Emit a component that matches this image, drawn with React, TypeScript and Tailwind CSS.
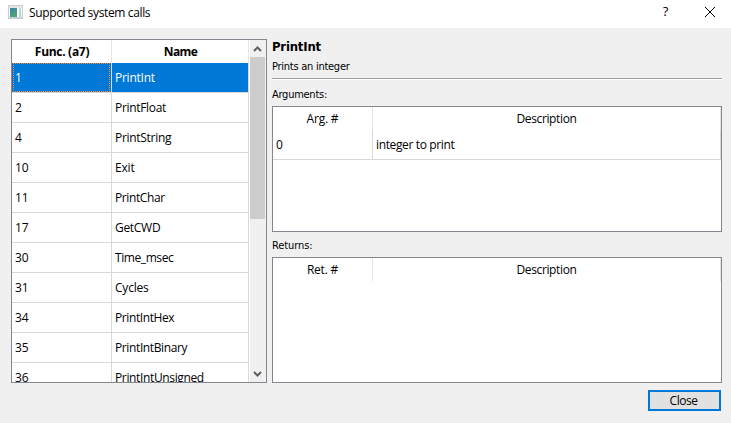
import React from "react";

const calls: [string, string, string][] = [
  ["1", "PrintInt", "tracking-[-0.25px]"],
  ["2", "PrintFloat", "tracking-[-0.32px]"],
  ["4", "PrintString", "tracking-[-0.3px]"],
  ["10", "Exit", "tracking-[-0.2px]"],
  ["11", "PrintChar", "tracking-[-0.4px]"],
  ["17", "GetCWD", "tracking-[-0.3px]"],
  ["30", "Time_msec", "tracking-[-0.42px]"],
  ["31", "Cycles", "tracking-[-0.2px]"],
  ["34", "PrintIntHex", "tracking-[-0.4px]"],
  ["35", "PrintIntBinary", "tracking-[-0.38px]"],
  ["36", "PrintIntUnsigned", "tracking-[-0.36px]"],
];

function AppIcon() {
  return (
    <svg width="15" height="14" viewBox="0 0 15 14" shapeRendering="crispEdges">
      <defs>
        <linearGradient id="pane" x1="0" y1="0" x2="0.6" y2="1">
          <stop offset="0" stopColor="#3f7fa8" />
          <stop offset="1" stopColor="#4fa673" />
        </linearGradient>
      </defs>
      <rect width="15" height="14" fill="#c9ccd0" />
      <rect x="1" y="1" width="13" height="2" fill="#e4e6e9" />
      <rect x="1" y="3" width="13" height="9" fill="#f8fafb" />
      <rect x="2" y="3" width="7" height="9" fill="url(#pane)" />
      <rect x="11" y="3" width="2" height="9" fill="#b9d8d6" />
    </svg>
  );
}

function DetailTable({ first, row }: { first: string; row?: [string, string] }) {
  return (
    <div className="flex h-[126px] flex-col border border-[#828790] bg-white">
      <div className="flex h-[23px] text-center leading-[24px]">
        <div className="w-[100px] border-r border-[#e5e5e5] tracking-[-0.2px]">{first}</div>
        <div className="flex-1 border-r border-[#e5e5e5]">Description</div>
      </div>
      {row && (
        <div className="flex h-[30px] border-b border-[#d8d8d8] leading-[30px]">
          <div className="w-[100px] border-r border-[#d8d8d8] pl-[3px]">{row[0]}</div>
          <div className="flex-1 border-r border-[#d8d8d8] pl-[3px]">{row[1]}</div>
        </div>
      )}
    </div>
  );
}

export default function App() {
  return (
    <div className="flex h-[423px] w-[731px] flex-col overflow-hidden bg-[#f0f0f0] font-['Open_Sans','Noto_Sans',sans-serif] text-[12px] tracking-[-0.36px] text-black">
      <header className="flex h-7 shrink-0 items-center bg-white pl-2">
        <div className="-mt-1">
          <AppIcon />
        </div>
        <h1 className="-mt-[3px] ml-1.5 flex-1">Supported system calls</h1>
        <span className="-mt-1 mr-[36px] text-[13px]">?</span>
        <svg className="-mt-1 mr-[15px]" width="12" height="12" viewBox="0 0 12 12" fill="none" stroke="#000">
          <path d="M1 1 11 11M11 1 1 11" />
        </svg>
      </header>

      <main className="flex gap-[5px] pr-[9px] pl-[11px]">
        <section className="mt-[11px] flex h-[344px] w-[256px] overflow-hidden border border-[#828790] bg-white">
          <div className="w-[237px] shrink-0">
            <div className="flex h-[23px] text-center leading-[24px] font-bold tracking-[-0.3px]">
              <div className="w-[100px] border-r border-[#e5e5e5] pl-px">Func. (a7)</div>
              <div className="w-[137px] border-r border-[#e5e5e5] pl-px tracking-[-0.6px]">Name</div>
            </div>
            {calls.map(([id, name, spacing], i) => (
              <div key={id} className={"flex h-[30px] border-b border-[#d8d8d8] leading-[30px] " + (i === 0 ? "text-white" : "")}>
                <div className={"flex w-[100px] border-r border-[#d8d8d8] tracking-[-0.1px] " + (i === 0 ? "bg-[#0078d7]" : "")}>
                  <div className={i === 0 ? "mr-px flex-1 border border-dotted border-[#ff8728] pl-[2px] leading-[28px] ml-px -indent-px" : "pl-[3px]"}>{id}</div>
                </div>
                <div className={"w-[137px] border-r border-[#d8d8d8] pl-[3px] " + spacing + (i === 0 ? " bg-[#0078d7]" : "")}>{name}</div>
              </div>
            ))}
          </div>
          <div className="ml-px flex flex-1 flex-col items-center bg-[#f0f0f0]">
            <svg className="h-[17px] shrink-0" width="16" height="17" viewBox="0 0 16 17" fill="none" stroke="#606060" strokeWidth="2">
              <path d="m4 11 3.5-3.5L11 11" />
            </svg>
            <div className="mr-px h-[162px] w-[15px] shrink-0 bg-[#cdcdcd]" />
            <svg className="mt-auto h-[17px] shrink-0" width="16" height="17" viewBox="0 0 16 17" fill="none" stroke="#606060" strokeWidth="2">
              <path d="m4 7 3.5 3.5L11 7" />
            </svg>
          </div>
        </section>

        <section className="flex w-[450px] flex-col">
          <h2 className="mt-[11px] h-4 font-['DejaVu_Sans_Condensed','DejaVu_Sans',sans-serif] text-[13px] leading-4 font-bold tracking-[-0.2px]">PrintInt</h2>
          <p className="mt-1 h-4 font-['DejaVu_Sans_Condensed','DejaVu_Sans',sans-serif] text-[11px] leading-4 tracking-[-0.26px]">Prints an integer</p>
          <div className="mt-[3px] h-0.5 border-t border-[#a0a0a0] bg-white" />
          <p className="mt-[7px] h-[19px] font-['DejaVu_Sans_Condensed','DejaVu_Sans',sans-serif] text-[11px] leading-4 tracking-[-0.26px]">Arguments:</p>
          <DetailTable first="Arg. #" row={["0", "integer to print"]} />
          <p className="mt-[6px] h-[19px] font-['DejaVu_Sans_Condensed','DejaVu_Sans',sans-serif] text-[11px] leading-4 tracking-[-0.1px]">Returns:</p>
          <DetailTable first="Ret. #" />
        </section>
      </main>

      <footer className="mt-[7px] flex justify-end pr-[10px]">
        <button className="h-[21px] w-[73px] border-2 border-[#0078d7] bg-[#e1e1e1] pr-[2px] leading-[18px] tracking-[-0.5px]">Close</button>
      </footer>
    </div>
  );
}
